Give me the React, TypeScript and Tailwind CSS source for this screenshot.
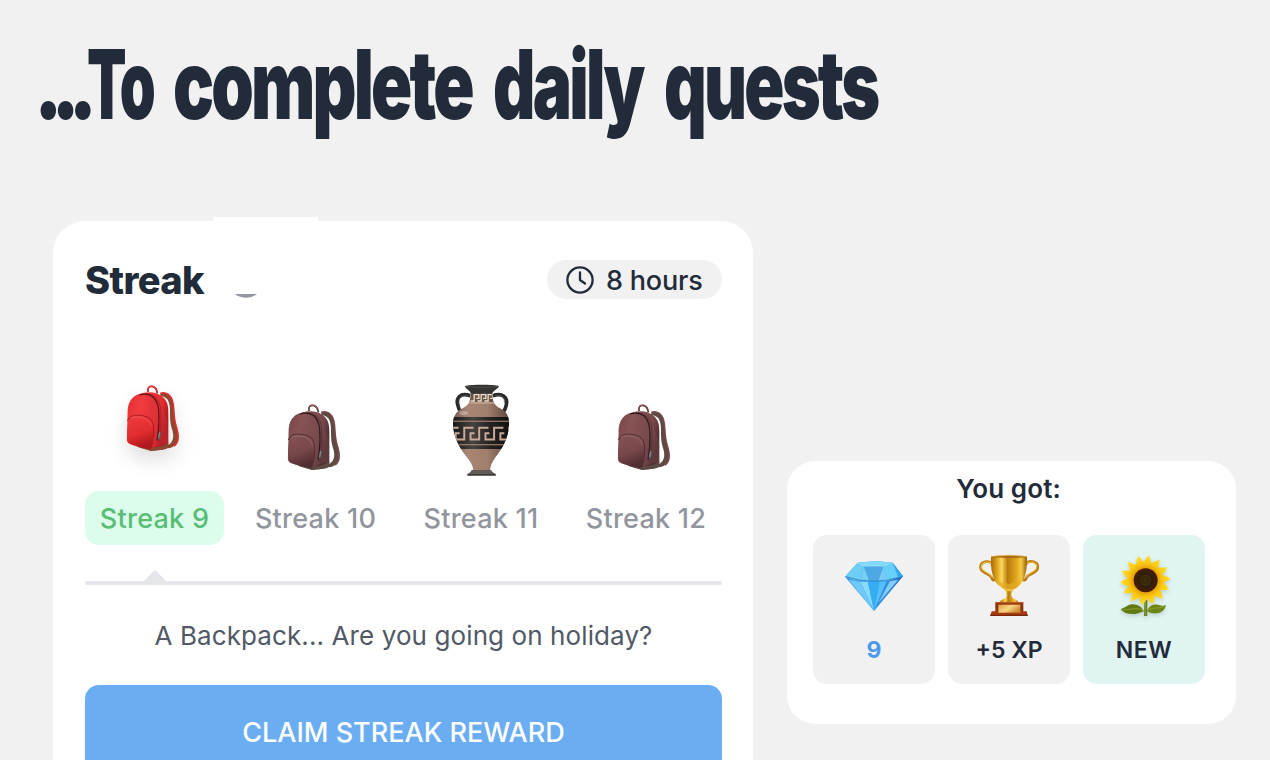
import React from 'react';
import clsx from 'clsx';

const RED = {
  id: 'red', light: '#f03c40', mid: '#e22d2f', dark: '#b0181d', edge: '#5f0f12', strap: '#8d4630', side: '#cf3a42',
};
const MUTED = {
  id: 'muted', light: '#875355', mid: '#784749', dark: '#502e31', edge: '#2d191b', strap: '#5c4a43', side: '#7c5053',
};

const Backpack = ({ colors, className }: { colors: typeof RED; className?: string }) => (
  <svg viewBox="75 42 168 210" className={clsx('h-[70px] w-14 overflow-visible', className)}>
    <defs>
      <linearGradient id={`body-${colors.id}`} x1="0" y1="0" x2="1" y2="0.4">
        <stop offset="0" stopColor={colors.mid} />
        <stop offset="0.35" stopColor={colors.light} />
        <stop offset="0.8" stopColor={colors.mid} />
        <stop offset="1" stopColor={colors.dark} />
      </linearGradient>
      <linearGradient id={`pocket-${colors.id}`} x1="0" y1="0" x2="0.3" y2="1">
        <stop offset="0" stopColor={colors.light} />
        <stop offset="0.6" stopColor={colors.mid} />
        <stop offset="1" stopColor={colors.dark} />
      </linearGradient>
    </defs>
    <path d="M181 70 C197 64 213 74 218 95 C224 119 219 139 228 167 C239 204 236 229 204 235 L192 232 C218 222 226 204 215 174 C206 144 214 116 206 95 C202 85 193 79 181 79Z" fill={colors.strap} />
    <path d="M181 70 C197 64 213 74 218 95 C224 119 219 139 228 167 C237 196 238 215 222 228" fill="none" stroke={colors.mid} strokeWidth="5" />
    <path d="M144 66 C142 52 148 48 157 49 C166 51 171 57 172 70" fill="none" stroke={colors.dark} strokeWidth="5" />
    <path d="M144 61 C143 51 150 48 158 50 C165 52 168 56 169 61" fill="none" stroke={colors.light} strokeWidth="4" />
    <path d="M128 69 C150 64 171 66 185 78 C201 90 205 104 205 128 L205 226 C204 235 193 238 180 240 L152 242 L88 222 C80 217 80 210 81 201 L83 119 C86 90 100 75 128 69Z" fill={`url(#body-${colors.id})`} />
    <path d="M144 69 C170 71 185 88 190 122 L203 150 L204 219 L153 231" fill={colors.side} opacity="0.35" />
    <path d="M153 231 C175 233 193 228 205 217 L204 231 C202 238 190 239 180 240 L153 243 L110 230Z" fill={colors.strap} />
    <path d="M117 75 C153 65 172 84 176 120 C178 150 177 179 171 212" fill="none" stroke={colors.edge} strokeWidth="3.5" />
    <path d="M137 69 C170 76 180 91 182 122 C184 154 182 187 176 217" fill="none" stroke={colors.dark} strokeWidth="2.5" />
    <path d="M100 139 C131 132 154 142 160 166 C163 190 158 218 151 238 C128 234 99 227 88 220 C80 214 80 199 82 178 C84 158 87 144 100 139Z" fill={`url(#pocket-${colors.id})`} />
    <path d="M82 153 C89 138 101 134 119 136 C149 138 160 152 161 173 C162 196 159 218 152 237" fill="none" stroke={colors.dark} strokeWidth="3" />
    <path d="M92 144 C117 136 149 143 154 168" fill="none" stroke="#fff" strokeWidth="3" opacity="0.15" />
    <path d="M178 183 L183 187 L180 207 L174 211 L173 201Z" fill="#55585b" />
    <path d="M179 187 L176 204" stroke="#a6aaac" strokeWidth="2" />
  </svg>
);

const KEYS = [32, 77, 122, 167, 212];

const Amphora = () => (
  <svg viewBox="66 40 178 278" className="h-[93px] w-[59px]">
    <defs>
      <linearGradient id="clay" x1="0" x2="1">
        <stop offset="0" stopColor="#6d5448" />
        <stop offset="0.25" stopColor="#a98674" />
        <stop offset="0.6" stopColor="#a17f6d" />
        <stop offset="1" stopColor="#5a4339" />
      </linearGradient>
      <linearGradient id="glaze" x1="0" x2="1">
        <stop offset="0" stopColor="#171717" />
        <stop offset="0.35" stopColor="#454342" />
        <stop offset="0.65" stopColor="#222" />
        <stop offset="1" stopColor="#111" />
      </linearGradient>
      <clipPath id="vase">
        <path d="M123 64 H187 C188 92 193 102 213 113 C231 122 240 140 238 163 C236 204 216 235 197 260 C187 274 181 286 181 301 H130 C130 286 122 274 111 260 C91 234 72 204 69 163 C68 139 78 121 98 112 C117 101 122 91 123 64Z" />
      </clipPath>
    </defs>
    <path d="M121 74 C91 64 76 81 84 104 C87 116 91 124 97 128 M189 74 C218 64 235 79 230 101 C227 116 222 123 216 128" fill="none" stroke="#292b2b" strokeWidth="11" />
    <path d="M116 75 C94 69 83 82 88 102 M195 75 C213 68 226 79 224 96" fill="none" stroke="#555" strokeWidth="2" />
    <g clipPath="url(#vase)">
      <path d="M66 55 H244 V310 H66Z" fill="url(#clay)" />
      <path d="M120 64 H190 V93 H120Z" fill="#6b5547" />
      <path d="M122 90 H133 V71 H147 V82 H139 M143 90 H154 V71 H168 V82 H160 M164 90 H175 V71 H189 V82 H181" fill="none" stroke="#e8dccb" strokeWidth="4" />
      <path d="M112 96 H198" stroke="#d4b9a2" strokeWidth="3" />
      <path d="M66 138 H244 V235 H66Z" fill="url(#glaze)" />
      <path d="M66 151 H244 M66 222 H244" stroke="#b78f75" strokeWidth="3" />
      {KEYS.map((x) => (
        <path key={x} d={`M${x + 12} 187 H${x} V206 H${x + 26} V171 H${x + 54}`} fill="none" stroke="#cba994" strokeWidth="6" />
      ))}
    </g>
    <ellipse cx="101" cy="126" rx="13" ry="6" fill="#fff" opacity="0.3" />
    <path d="M105 45 C118 40 195 40 208 45 C205 54 193 57 187 67 H123 C120 57 108 56 105 45Z" fill="#353433" />
    <path d="M109 46 C132 50 181 50 204 46" fill="none" stroke="#5d5855" strokeWidth="2" />
    <path d="M125 298 H184 C185 304 193 307 198 310 V315 H112 V310 C119 307 124 304 125 298Z" fill="#625a57" />
    <path d="M113 313 H198" stroke="#373333" strokeWidth="4" />
  </svg>
);

const Diamond = () => (
  <svg viewBox="126 96 192 192" className="size-16">
    <defs>
      <linearGradient id="gem" x1="0" x2="1">
        <stop offset="0" stopColor="#4197df" />
        <stop offset="0.5" stopColor="#35aff5" />
        <stop offset="1" stopColor="#1e62bd" />
      </linearGradient>
    </defs>
    <path d="M135 170 L173 128 L228 123 L278 128 L309 169 L222 273Z" fill="url(#gem)" />
    <path d="M135 170 L173 128 L190 138 L182 183 Q157 180 135 170Z" fill="#6dcdf4" />
    <path d="M173 128 L228 123 L278 128 L251 139 L190 138Z" fill="#83daf8" />
    <path d="M190 138 L251 139 L259 184 L182 184Z" fill="#4ea8e4" />
    <path d="M190 138 L208 184 H182Z M251 139 L235 184 H259Z" fill="#77cef5" />
    <path d="M278 128 L309 169 L259 184 L251 139Z" fill="#68cff8" />
    <path d="M278 128 L294 170 L309 169Z" fill="#36a6ec" />
    <path d="M146 179 L182 186 L218 268Z" fill="#6fc9fb" />
    <path d="M182 186 H204 L222 273Z" fill="#8adaff" />
    <path d="M204 186 H239 L222 273Z" fill="#35adf3" />
    <path d="M239 186 H260 L222 273Z" fill="#55c0fb" />
    <path d="M260 184 L296 179 L222 273Z" fill="#3a8ee0" />
    <path d="M270 184 L294 179 L235 249Z" fill="#85cdf8" />
    <path d="M136 170 Q221 198 308 169" fill="none" stroke="#297fc3" strokeWidth="2.5" />
    <path d="M173 128 L190 138 H251 L278 128" fill="none" stroke="#a9eafc" strokeWidth="2" />
  </svg>
);

const Trophy = () => (
  <svg viewBox="111 66 192 192" className="size-16 overflow-visible">
    <defs>
      <linearGradient id="gold" x1="0" x2="1">
        <stop offset="0" stopColor="#a66a08" />
        <stop offset="0.16" stopColor="#dda01a" />
        <stop offset="0.3" stopColor="#fbd95c" />
        <stop offset="0.46" stopColor="#b97c0c" />
        <stop offset="0.7" stopColor="#dfa71f" />
        <stop offset="0.84" stopColor="#f3cb45" />
        <stop offset="1" stopColor="#925a05" />
      </linearGradient>
      <linearGradient id="plate" x1="0" x2="1" y2="0.5">
        <stop offset="0" stopColor="#e0a044" />
        <stop offset="0.55" stopColor="#f8d584" />
        <stop offset="1" stopColor="#d18c35" />
      </linearGradient>
    </defs>
    <path d="M157 102 C147 89 120 94 122 114 C124 130 149 130 154 142 C156 151 163 152 164 148 M258 102 C268 88 296 94 293 114 C291 130 265 131 260 142 C258 151 252 152 250 148" fill="none" stroke="#b87912" strokeWidth="8" strokeLinecap="round" />
    <path d="M156 102 C146 91 122 96 124 113 C127 127 148 126 154 140 M259 102 C269 91 293 96 290 113 C287 127 265 127 260 140" fill="none" stroke="#f0bd35" strokeWidth="3.5" strokeLinecap="round" />
    <path d="M193 171 H221 C220 180 213 184 214 197 C216 207 230 207 234 215 V220 H180 V215 C185 206 198 208 200 197 C201 185 194 181 193 171Z" fill="url(#gold)" />
    <path d="M153 80 H261 C262 122 255 162 224 176 H191 C159 162 151 123 153 80Z" fill="url(#gold)" />
    <path d="M171 148 C181 164 198 156 207 163 C219 154 234 162 244 147 C239 166 230 175 221 178 H194 C182 173 175 164 171 148Z" fill="#e6ad22" opacity="0.7" />
    <ellipse cx="207" cy="80" rx="54" ry="4" fill="#a96b0a" />
    <path d="M153 80 Q207 71 261 80" fill="none" stroke="#e8ba49" strokeWidth="2" />
    <ellipse cx="207" cy="180" rx="14" ry="4" fill="#f0bd35" />
    <path d="M166 217 H250 V246 H166Z" fill="#8e310d" />
    <path d="M166 218 H250" stroke="#ba5a25" strokeWidth="4" />
    <path d="M155 244 H260 L264 258 H150Z" fill="#a53b12" />
    <path d="M175 224 H241 V248 H175Z" fill="url(#plate)" />
    <path d="M151 256 H263" stroke="#6e240b" strokeWidth="3" />
  </svg>
);

const PETALS = [0, 26, 52, 78, 103, 129, 155, 180, 206, 232, 257, 283, 309, 335];

const Sunflower = () => (
  <svg viewBox="112 66 192 192" className="size-16 overflow-visible drop-shadow-[0_2px_2px_rgba(0,0,0,0.15)]">
    <defs>
      <linearGradient id="petal" x1="0" x2="0" y1="0" y2="1">
        <stop offset="0" stopColor="#ffe02e" />
        <stop offset="0.5" stopColor="#fac811" />
        <stop offset="1" stopColor="#d88405" />
      </linearGradient>
      <radialGradient id="seeds">
        <stop offset="0" stopColor="#43300e" />
        <stop offset="0.6" stopColor="#2e1e09" />
        <stop offset="1" stopColor="#4e1b05" />
      </radialGradient>
    </defs>
    <path d="M209 209 H218 V258 H208Z" fill="#667d20" />
    <path d="M212 211 V257" stroke="#9ead48" strokeWidth="2" />
    <path d="M208 248 C205 226 174 215 157 228 C151 233 143 234 138 239 C153 254 183 258 208 242Z" fill="#617b13" />
    <path d="M217 248 C219 225 241 219 256 226 C264 229 269 227 274 226 C269 249 242 258 217 244Z" fill="#6c8616" />
    <path d="M142 239 C167 241 183 230 207 241 M218 242 C231 231 252 237 270 229" fill="none" stroke="#a1ac3b" strokeWidth="2" />
    {PETALS.map((angle) => (
      <path
        key={`back-${angle}`}
        d="M200 122 C199 110 205 102 212 96 C219 103 223 112 220 122Z"
        transform={`rotate(${angle + 19} 212 151)`}
        fill="#d98705"
      />
    ))}
    {PETALS.map((angle) => (
      <path
        key={angle}
        d="M202 126 C194 107 201 92 215 75 C225 94 229 108 221 126Z"
        transform={`rotate(${angle + 6} 212 151)`}
        fill="url(#petal)"
      />
    ))}
    <circle cx="213" cy="151" r="36" fill="url(#seeds)" />
    <circle cx="213" cy="151" r="27" fill="none" stroke="#4a320c" strokeWidth="2" strokeDasharray="2 3" />
    <circle cx="213" cy="151" r="14" fill="none" stroke="#463b10" strokeWidth="4" strokeDasharray="2 3" />
  </svg>
);

const Clock = () => (
  <svg viewBox="0 0 28 28" className="size-7" fill="none" stroke="#222b3a" strokeWidth="2.3" strokeLinecap="round">
    <circle cx="14" cy="14" r="12.6" />
    <path d="M14 6.5 V14 L19 17.5" strokeLinejoin="round" />
  </svg>
);

// The title is set word by word so each one keeps its own condensed width.
const WORDS = [
  { text: '...', box: 'w-[46px]', scale: 'scale-x-[0.8] tracking-[-14.2px] -ml-[7px]' },
  { text: 'To', box: 'w-[86px]', scale: 'scale-x-[0.6] tracking-[-4px]' },
  { text: 'complete', box: 'w-[320px]', scale: 'scale-x-[0.71] tracking-[-4px]' },
  { text: 'daily', box: 'w-[171px]', scale: 'scale-x-[0.685] tracking-[-4px]' },
  { text: 'quests', box: 'w-[214px]', scale: 'scale-x-[0.69] tracking-[-4px]' },
];

const STREAKS = [
  { label: 'Streak 9', width: 'w-[139px]', icon: <Backpack colors={RED} className="mb-[19px] -ml-1 drop-shadow-[0_10px_9px_rgba(0,0,0,0.12)]" />, active: true },
  { label: 'Streak 10', width: 'w-[153px]', icon: <Backpack colors={MUTED} className="-ml-1" /> },
  { label: 'Streak 11', width: 'w-[148px]', icon: <div className="mb-[-4px]"><Amphora /></div> },
  { label: 'Streak 12', width: 'w-[152px]', icon: <Backpack colors={MUTED} className="-ml-1" /> },
];

const REWARDS = [
  { label: '9', icon: <Diamond />, tile: 'bg-[#f1f1f1]', text: 'text-[#4a9bed] font-bold' },
  { label: '+5 XP', icon: <Trophy />, tile: 'bg-[#f1f1f1]', text: 'text-[#222b3a] font-semibold' },
  { label: 'NEW', icon: <Sunflower />, tile: 'bg-[#e0f4f2]', text: 'text-[#222b3a] font-semibold tracking-[0.5px]' },
];

const StreakCard = () => (
  <section className="relative h-[620px] w-[700px] shrink-0 rounded-[32px] bg-white pl-8 pr-[31px] pt-[39px]">
    <div className="absolute -top-1 left-40 h-2 w-[105px] bg-white" />
    <div className="flex h-[39px] items-center justify-between">
      <div className="flex items-center">
        <h2 className="w-[150px] pt-px text-[38px] font-extrabold tracking-[-0.6px]">Streak</h2>
        <svg viewBox="0 0 22 4" className="mt-8 h-1 w-[22px]">
          <path d="M0 0 H22 C16 5 6 5 0 0Z" fill="#9297a1" />
        </svg>
      </div>
      <div className="flex h-[39px] w-[175px] items-center gap-3 rounded-full bg-[#f1f1f1] pl-[19px]">
        <Clock />
        <span className="whitespace-nowrap pt-[3px] text-[27px] font-medium tracking-[-0.2px]">8 hours</span>
      </div>
    </div>
    <div className="mt-[70px] flex gap-[15px]">
      {STREAKS.map(({ label, width, icon, active }) => (
        <div key={label} className={clsx('flex flex-col items-center', width)}>
          <div className="flex h-[122px] items-end pb-[18px]">{icon}</div>
          <span
            className={clsx(
              'flex h-[54px] w-full items-center justify-center whitespace-nowrap rounded-[14px] pt-0.5 text-[27px] font-medium tracking-[0.25px]',
              active ? 'bg-[#dcfdeb] text-[#59bd75]' : 'text-[#91959d]',
            )}
          >
            {label}
          </span>
        </div>
      ))}
    </div>
    <svg viewBox="0 0 22 11" className="ml-[59px] mt-[25px] block h-[11px] w-[22px]">
      <path d="M0 11 L9.5 1.2 Q11 0 12.5 1.2 L22 11Z" fill="#e5e6ea" />
    </svg>
    <div className="h-1 rounded-full bg-[#e5e6ea]" />
    <p className="mt-[31px] whitespace-nowrap text-center text-[26px] leading-10 tracking-[0.1px] text-[#515966]">
      A Backpack... Are you going on holiday?
    </p>
    <button className="mt-[29px] h-24 w-full rounded-[14px] bg-[#6badf3] text-[27px] font-medium text-white">
      CLAIM STREAK REWARD
    </button>
  </section>
);

const RewardCard = () => (
  <section className="ml-[34px] mt-60 h-[263px] w-[449px] shrink-0 rounded-[28px] bg-white px-[26px] pt-3">
    <h3 className="-ml-1.5 text-center text-[26px] font-semibold leading-8 tracking-[0.1px]">You got:</h3>
    <div className="mt-[30px] flex gap-[13px]">
      {REWARDS.map(({ label, icon, tile, text }) => (
        <div key={label} className={clsx('flex h-[149px] w-[122px] shrink-0 flex-col items-center rounded-[14px] pt-[17px]', tile)}>
          {icon}
          <span className={clsx('mt-[18px] text-[23px] leading-8', text)}>{label}</span>
        </div>
      ))}
    </div>
  </section>
);

const App = () => (
  <main className="h-[760px] w-[1270px] overflow-hidden bg-[#f1f1f1] font-['Inter',sans-serif] text-[#222b3a]">
    <h1 className="ml-[41px] flex h-[221px] pt-[26px] text-[96px] font-black leading-[116px]">
      {WORDS.map(({ text, box, scale }) => (
        <span key={text} className={box}>
          <span className={clsx('inline-block origin-left', scale)}>{text}</span>
        </span>
      ))}
    </h1>
    <div className="ml-[53px] flex items-start">
      <StreakCard />
      <RewardCard />
    </div>
  </main>
);

export default App;
